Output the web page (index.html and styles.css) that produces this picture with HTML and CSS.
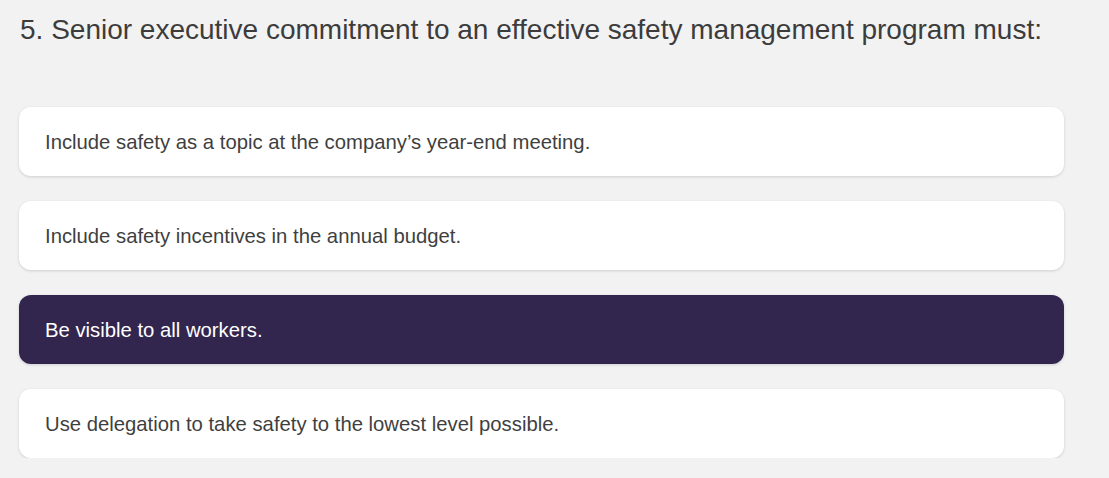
FILE: index.html
```html
<!DOCTYPE html>
<html>
<head>
<meta charset="utf-8">
<link rel="stylesheet" href="styles.css">
</head>
<body>
<div class="quiz">
  <h1 class="question">5. Senior executive commitment to an effective safety management program must:</h1>
  <div class="options">
    <div class="option">Include safety as a topic at the company’s year-end meeting.</div>
    <div class="option">Include safety incentives in the annual budget.</div>
    <div class="option selected">Be visible to all workers.</div>
    <div class="option">Use delegation to take safety to the lowest level possible.</div>
  </div>
</div>
</body>
</html>
```
FILE: styles.css
```css
html, body {
  margin: 0;
  padding: 0;
  background: #f2f2f2;
  font-family: "Liberation Sans", Arial, sans-serif;
}
.quiz {
  width: 1045px;
  padding: 12px 0 0 19px;
}
.question {
  margin: 0 0 0 1px;
  font-size: 28px;
  font-weight: normal;
  color: #3c3c3c;
  line-height: 36px;
}
.options {
  display: flex;
  flex-direction: column;
  gap: 25px;
  margin-top: 59px;
}
.option {
  height: 69px;
  box-sizing: border-box;
  display: flex;
  align-items: center;
  padding: 2px 26px 0;
  background: #ffffff;
  border-radius: 12px;
  box-shadow: 0 1px 3px rgba(0,0,0,0.15);
  font-size: 20.3px;
  color: #3f3f3f;
}
.option.selected {
  background: #32264f;
  color: #ffffff;
}
```
